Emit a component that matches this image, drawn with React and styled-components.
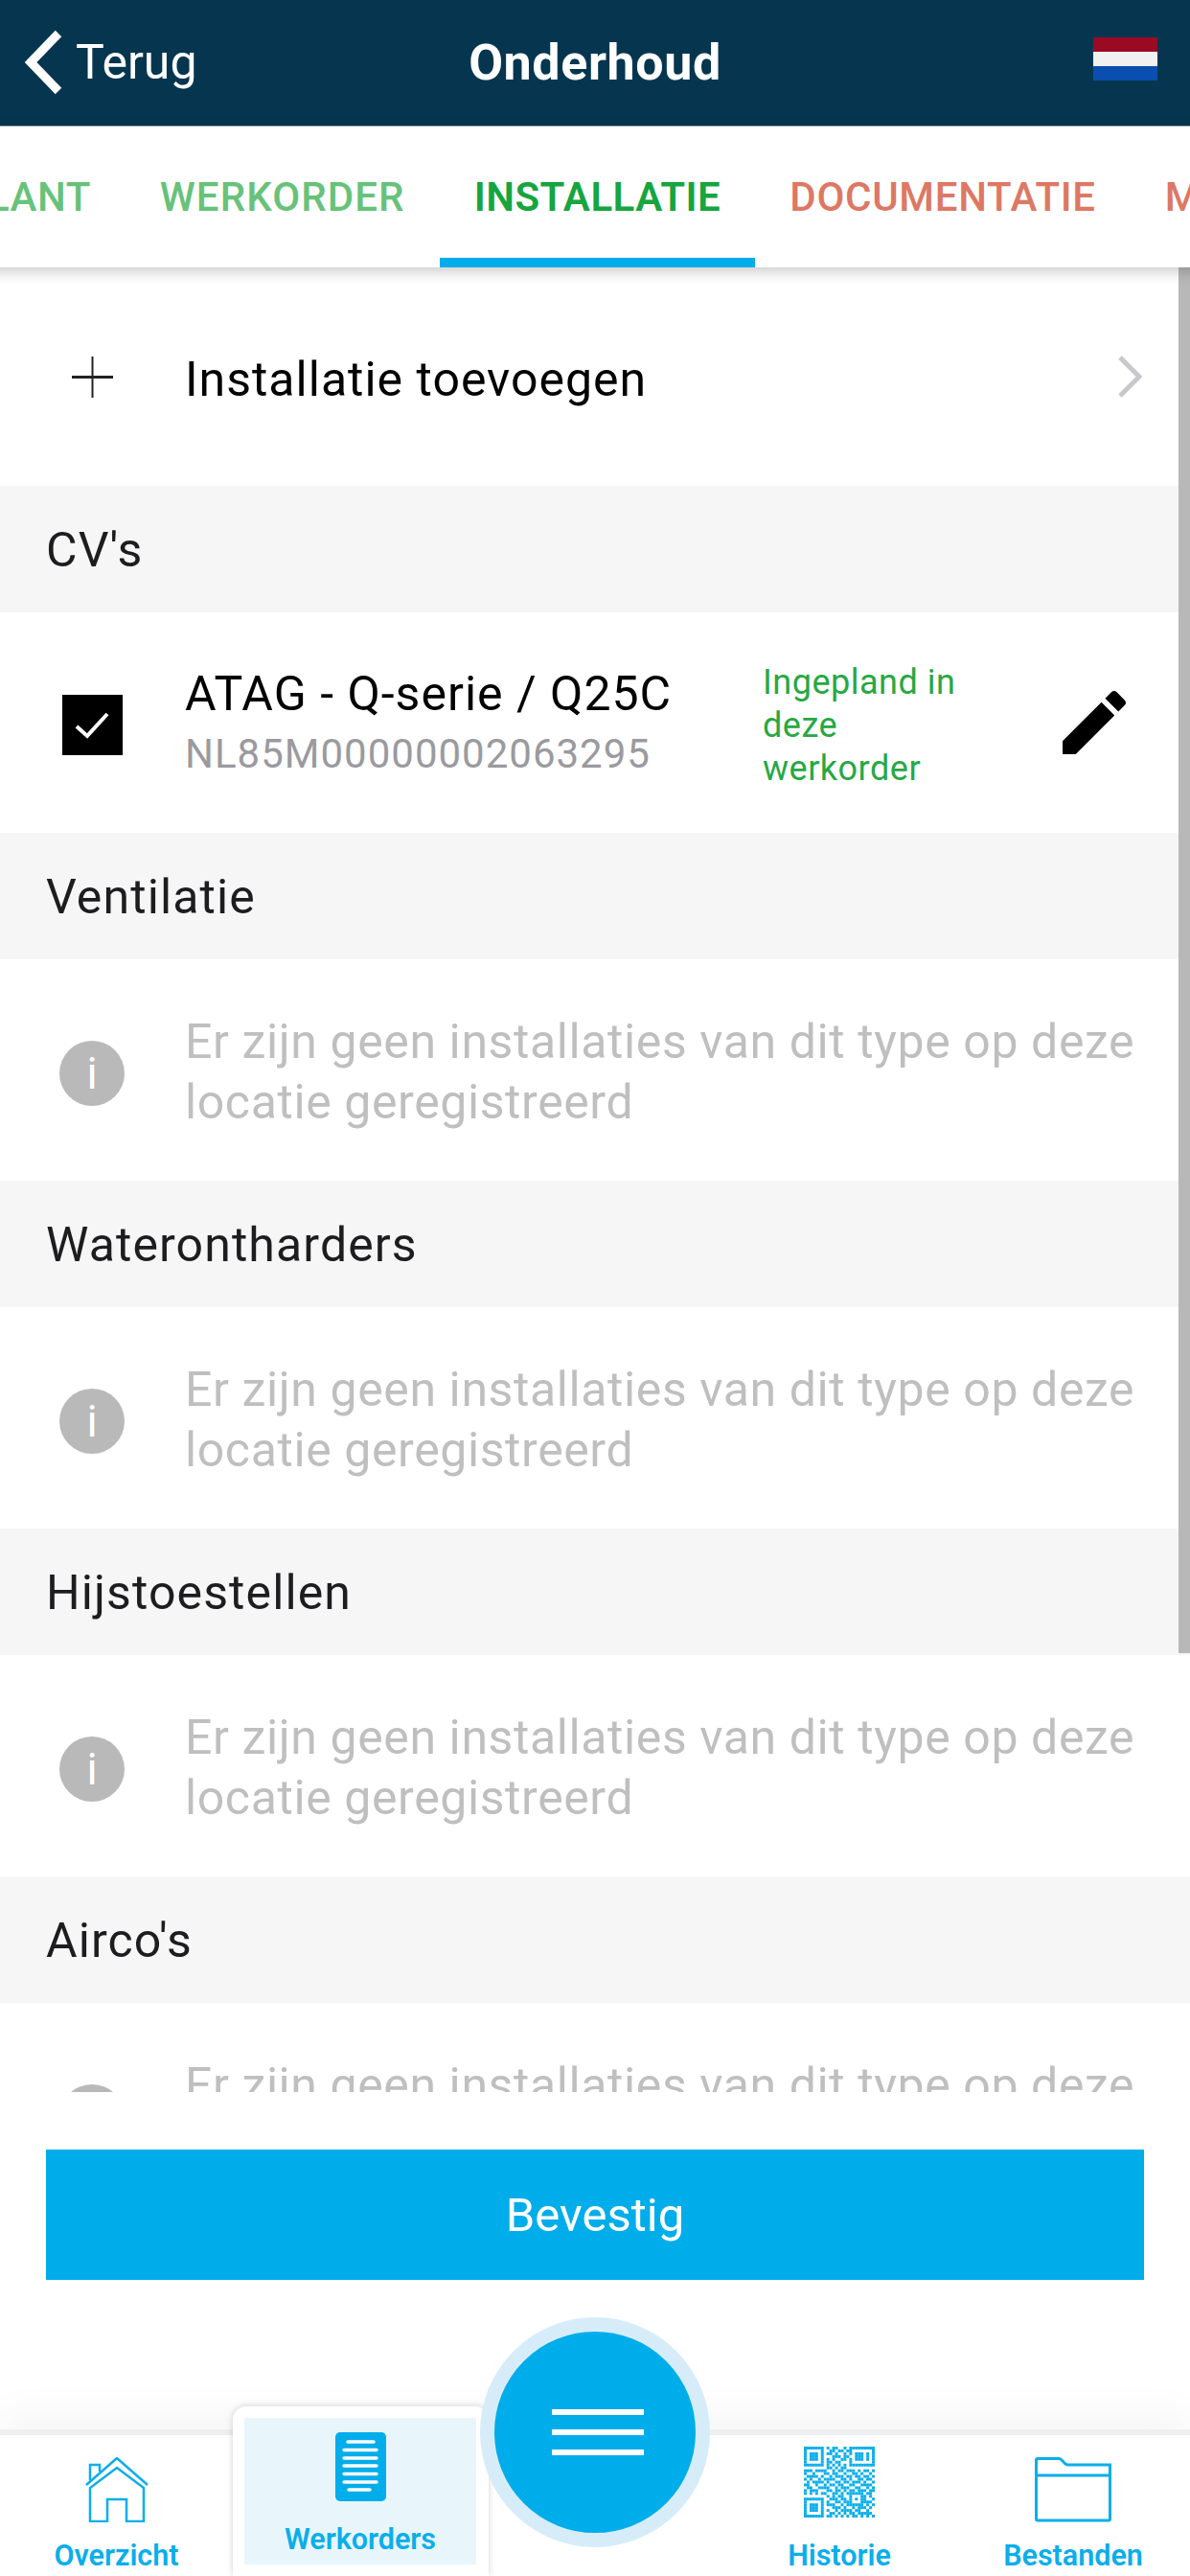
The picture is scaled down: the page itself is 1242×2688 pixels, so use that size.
import React from 'react'
import styled, { createGlobalStyle } from 'styled-components'

const GlobalStyle = createGlobalStyle`
  html, body {
    margin: 0;
    padding: 0;
    background: #fff;
  }
  * {
    box-sizing: border-box;
  }
`

const Page = styled.div`
  position: relative;
  display: flex;
  flex-direction: column;
  width: 1242px;
  height: 2688px;
  overflow: hidden;
  background: #fff;
  font-family: Roboto, "Noto Sans", sans-serif;
`

const Header = styled.header`
  display: grid;
  grid-template-columns: 1fr auto 1fr;
  align-items: center;
  height: 132px;
  padding: 0 34px 2px 34px;
  background: #06364f;
  border-bottom: 1px solid #8fa3ae;
  color: #fff;
`

const BackLink = styled.div`
  display: flex;
  align-items: center;
  gap: 11px;
  margin-left: -10px;
  font-size: 50px;
`

const PageTitle = styled.h1`
  margin: 2px 0 0;
  font-size: 52px;
  font-weight: 700;
  letter-spacing: 0.6px;
`

const Flag = styled.svg`
  justify-self: end;
  width: 67px;
  height: 45px;
  margin-bottom: 6px;
`

const TabBar = styled.nav`
  position: relative;
  z-index: 2;
  display: flex;
  flex: none;
  height: 147px;
  margin-left: -76px;
  width: 1400px;
  box-shadow: 0 4px 14px rgba(0, 0, 0, 0.22);
  background: #fff;
`

const Body = styled.div`
  flex: 1;
  display: flex;
  flex-direction: column;
  min-height: 0;
  position: relative;
`

const Tab = styled.div`
  display: flex;
  align-items: center;
  height: 147px;
  padding: 10px 36px 0;
  font-size: 42px;
  font-weight: ${({ $active }) => ($active ? 600 : 500)};
  letter-spacing: ${({ $spacing }) => $spacing}px;
  color: ${({ $color }) => $color};
  border-bottom: 10px solid ${({ $active }) => ($active ? '#00adeb' : 'transparent')};
  white-space: nowrap;
`

const List = styled.main`
  flex: 1;
  min-height: 0;
  overflow: hidden;
`

const AddRow = styled.div`
  display: flex;
  align-items: center;
  height: 228px;
  padding: 0 50px 0 75px;
`

const AddLabel = styled.span`
  flex: 1;
  margin: 5px 0 0 75px;
  font-size: 50px;
  letter-spacing: 1px;
  color: #000;
`

const SectionTitle = styled.h2`
  display: flex;
  align-items: center;
  height: 132px;
  margin: 0;
  padding: 2px 0 0 48px;
  background: #f6f6f6;
  font-size: 50px;
  font-weight: 400;
  letter-spacing: 1.1px;
  color: #1d1d20;
`

const InstallationRow = styled.div`
  display: flex;
  align-items: center;
  height: 230px;
  padding-left: 65px;
`

const CheckBox = styled.div`
  display: flex;
  flex: none;
  width: 63px;
  height: 63px;
  margin-top: 4px;
  background: #000;
`

const InstallationInfo = styled.div`
  display: flex;
  flex-direction: column;
  gap: 9px;
  width: 603px;
  margin-left: 65px;
  margin-top: -2px;
`

const InstallationName = styled.span`
  font-size: 50px;
  letter-spacing: 1px;
  color: #000;
`

const Serial = styled.span`
  font-size: 42px;
  letter-spacing: 1px;
  color: #9a9a9f;
`

const PlannedNote = styled.div`
  width: 232px;
  margin-top: 6px;
  font-size: 36px;
  line-height: 45px;
  letter-spacing: 0.5px;
  color: #27a844;
`

const EditIcon = styled.svg`
  width: 88px;
  height: 88px;
  margin-left: 70px;
  flex: none;
`

const EmptyRow = styled.div`
  display: flex;
  align-items: center;
  height: 231px;
  padding-left: 62px;
`

const InfoBadge = styled.div`
  display: flex;
  flex: none;
  align-items: center;
  justify-content: center;
  width: 68px;
  height: 68px;
  margin-top: 6px;
  border-radius: 50%;
  background: #b9b9b9;
  color: #fff;
  font-size: 46px;
  font-weight: 400;
`

const EmptyText = styled.p`
  width: 1030px;
  margin: 4px 0 0 63px;
  font-size: 50px;
  line-height: 63px;
  letter-spacing: 0.6px;
  color: #bfbfbf;
`

const Footer = styled.div`
  flex: none;
  height: 352px;
  padding: 60px 48px 0;
  background: #fff;
`

const ConfirmButton = styled.button`
  display: block;
  width: 100%;
  height: 136px;
  border: none;
  border-radius: 0;
  background: #00adeb;
  color: #fff;
  font-family: inherit;
  font-size: 49px;
`

const Nav = styled.div`
  position: relative;
  display: flex;
  flex: none;
  height: 153px;
  border-top: 6px solid #ecf0f1;
  background: #fff;
  box-shadow: 0 -14px 44px rgba(0, 0, 0, 0.045);
`

const NavItem = styled.div`
  display: flex;
  flex-direction: column;
  align-items: center;
  justify-content: flex-end;
  width: ${({ $width }) => $width}px;
  height: 147px;
  padding-bottom: 4px;
  color: #0aaeea;
  font-size: 30.5px;
  font-weight: 600;
`

const NavIcon = styled.svg`
  display: block;
  width: ${({ $w }) => $w}px;
  height: ${({ $h }) => $h}px;
  margin-bottom: ${({ $gap }) => $gap}px;
`

const NavSpacer = styled.div`
  width: 244px;
`

const ActiveCard = styled.div`
  display: flex;
  flex: none;
  width: 267px;
  height: 177px;
  margin-top: -30px;
  padding: 12px 13px 12px 12px;
  background: #fff;
  border-radius: 14px 14px 0 0;
  box-shadow: 0 0 7px rgba(0, 0, 0, 0.18);
`

const ActiveInner = styled.div`
  display: flex;
  flex-direction: column;
  align-items: center;
  width: 100%;
  height: 153px;
  padding-top: 15px;
  background: #e8f6fc;
  color: #0aaeea;
  font-size: 30.5px;
  font-weight: 600;
`

const MenuButton = styled.div`
  position: absolute;
  left: 501px;
  top: -123px;
  display: flex;
  flex-direction: column;
  align-items: center;
  justify-content: center;
  gap: 15px;
  width: 240px;
  height: 240px;
  padding-left: 6px;
  border: 15px solid #d6edf9;
  border-radius: 50%;
  background: #00adeb;
`

const MenuLine = styled.span`
  width: 96px;
  height: 6px;
  background: #fff;
`

const ScrollThumb = styled.div`
  position: absolute;
  z-index: 1;
  top: 279px;
  right: 0;
  width: 12px;
  height: 1446px;
  background: #b8b8b8;
`

const qrRows = [
  '1111111010110010111111111',
  '1000001001101101100000001',
  '1011101011010010101110101',
  '1011101000111011001110101',
  '1011101010100110101110101',
  '1000001011011000100000001',
  '1111111010101010111111111',
  '0000000011010110000000000',
  '1110111100101101110101101',
  '1001000110110010011010010',
  '0111101001011101101101101',
  '1010010111100110100110110',
  '0101111010011011011101001',
  '1100100101101100110011110',
  '0110011110010111001100101',
  '1011100011011010110111011',
  '1010101100110101111110110',
  '0000000010101100100011010',
  '1111111001110110101011001',
  '1000001010011011100011110',
  '1011101011100101111110101',
  '1011101000111010010111010',
  '1011101010010111101100100',
  '1000001001101010110111110',
  '1111111011010101011010101',
]

const Qr = () => (
  <NavIcon $w={74} $h={74} $gap={22} viewBox="0 0 25 25">
    {qrRows.map((row, y) =>
      row.split('').map((cell, x) =>
        cell === '1' ? <rect key={`${x}-${y}`} x={x} y={y} width="1" height="1" fill="#0aaeea" /> : null
      )
    )}
  </NavIcon>
)

const sections = ['Ventilatie', 'Waterontharders', 'Hijstoestellen', "Airco's"]

const App = () => {
  return (
    <Page>
      <GlobalStyle />
      <Header>
        <BackLink>
          <svg width="44" height="70" viewBox="0 0 44 70">
            <path d="M37 5 L8 35 L37 65" fill="none" stroke="#fff" strokeWidth="9" />
          </svg>
          Terug
        </BackLink>
        <PageTitle>Onderhoud</PageTitle>
        <Flag viewBox="0 0 3 3" preserveAspectRatio="none">
          <rect width="3" height="1" fill="#9b0a23" />
          <rect y="1" width="3" height="1" fill="#f1f1f1" />
          <rect y="2" width="3" height="1" fill="#0a4eb0" />
        </Flag>
      </Header>
      <TabBar>
        <Tab $color="#67c27a" $spacing={0.5}>KLANT</Tab>
        <Tab $color="#67c27a" $spacing={1.1}>WERKORDER</Tab>
        <Tab $color="#16a53f" $spacing={0.5} $active>INSTALLATIE</Tab>
        <Tab $color="#dd7864" $spacing={0.7}>DOCUMENTATIE</Tab>
        <Tab $color="#dd7864" $spacing={0.5}>MATERIAAL</Tab>
      </TabBar>
      <Body>
        <List>
          <AddRow>
            <svg width="43" height="43" viewBox="0 0 43 43">
              <path d="M21.5 0 V43" stroke="#222" strokeWidth="2" />
              <path d="M0 21.5 H43" stroke="#222" strokeWidth="3" />
            </svg>
            <AddLabel>Installatie toevoegen</AddLabel>
            <svg width="26" height="44" viewBox="0 0 26 44">
              <path d="M3 2 L23 22 L3 42" fill="none" stroke="#c8c8cc" strokeWidth="5" />
            </svg>
          </AddRow>
          <SectionTitle>CV's</SectionTitle>
          <InstallationRow>
            <CheckBox>
              <svg width="63" height="63" viewBox="0 0 63 63">
                <path d="M15 33 L26 43 L47 20" fill="none" stroke="#fff" strokeWidth="4" />
              </svg>
            </CheckBox>
            <InstallationInfo>
              <InstallationName>ATAG - Q-serie / Q25C</InstallationName>
              <Serial>NL85M00000002063295</Serial>
            </InstallationInfo>
            <PlannedNote>Ingepland in deze werkorder</PlannedNote>
            <EditIcon viewBox="0 0 24 24">
              <path d="M3 17.25V21h3.75L17.81 9.94l-3.75-3.75L3 17.25zM20.71 7.04c.39-.39.39-1.02 0-1.41l-2.34-2.34c-.39-.39-1.02-.39-1.41 0l-1.83 1.83 3.75 3.75 1.83-1.83z" />
            </EditIcon>
          </InstallationRow>
          {sections.map((name) => (
            <React.Fragment key={name}>
              <SectionTitle>{name}</SectionTitle>
              <EmptyRow>
                <InfoBadge>i</InfoBadge>
                <EmptyText>Er zijn geen installaties van dit type op deze locatie geregistreerd</EmptyText>
              </EmptyRow>
            </React.Fragment>
          ))}
        </List>
        <Footer>
          <ConfirmButton>Bevestig</ConfirmButton>
        </Footer>
        <Nav>
          <NavItem $width={243}>
            <NavIcon $w={66} $h={68} $gap={17} viewBox="0 0 66 68" fill="none" stroke="#0aaeea" strokeWidth="2.5">
              <path d="M1 29 L33 1 L65 29" />
              <path d="M5 67 V32 L33 11 L61 32 V67 H43 V44 H23 V67 Z" />
              <path d="M5 24 V8 H15 V15" />
            </NavIcon>
            Overzicht
          </NavItem>
          <ActiveCard>
            <ActiveInner>
              <NavIcon $w={53} $h={72} $gap={22} viewBox="0 0 53 72">
                <rect width="53" height="72" rx="5" fill="#00adeb" />
                <path
                  d="M13 10 H40 M9 18.500 H43 M9 27 H43 M9 35 H43 M9 43.500 H43 M9 52 H43 M14 60 H36"
                  stroke="#fff"
                  strokeWidth="3.500"
                  strokeLinecap="round"
                />
              </NavIcon>
              Werkorders
            </ActiveInner>
          </ActiveCard>
          <NavSpacer />
          <NavItem $width={244}>
            <Qr />
            Historie
          </NavItem>
          <NavItem $width={244}>
            <NavIcon $w={80} $h={68} $gap={17} viewBox="0 0 80 68" fill="none" stroke="#0aaeea" strokeWidth="3">
              <path d="M3 66 H77 Q78.500 66 78.500 64 V8 H35 Q32 8 30 5 L28 3 Q27 1.500 25 1.500 H3 Q1.500 1.500 1.500 3 V64 Q1.500 66 3 66 Z" />
              <path d="M1.500 19 H78.500" />
            </NavIcon>
            Bestanden
          </NavItem>
          <MenuButton>
            <MenuLine />
            <MenuLine />
            <MenuLine />
          </MenuButton>
        </Nav>
      </Body>
      <ScrollThumb />
    </Page>
  )
}

export default App
